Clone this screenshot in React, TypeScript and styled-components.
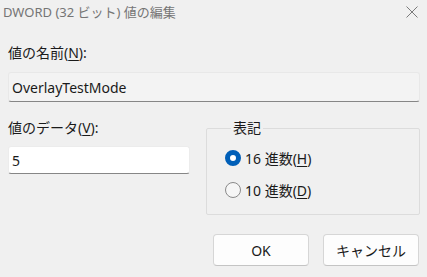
import styled, { createGlobalStyle } from 'styled-components';

const GlobalStyle = createGlobalStyle`
  html, body {
    margin: 0;
    padding: 0;
    background: #f0f0f0;
  }
  body {
    font-family: "Noto Sans", "Noto Sans CJK JP", sans-serif;
    color: #1a1a1a;
  }
`;

const Dialog = styled.div`
  width: 427px;
  height: 277px;
  background: #f0f0f0;
  display: flex;
  flex-direction: column;
  font-size: 14px;
`;

const TitleBar = styled.div`
  height: 30px;
  display: flex;
  align-items: flex-start;
  justify-content: space-between;
  padding: 2px 8px 0 3px;
  box-sizing: border-box;
`;

const Title = styled.span`
  font-size: 13px;
  line-height: 20px;
  color: #757575;
`;

const CloseIcon = styled.svg`
  margin-top: 3px;
`;

const Body = styled.div`
  padding: 13px 7px 0 8px;
  display: flex;
  flex-direction: column;
`;

const Label = styled.div`
  line-height: 20px;
  height: 20px;
`;

const U = styled.span`
  text-decoration: underline;
  text-underline-offset: 2px;
`;

const Field = styled.div<{ $readOnly?: boolean; $width?: number }>`
  box-sizing: border-box;
  height: ${(p) => (p.$readOnly ? 30 : 28)}px;
  width: ${(p) => (p.$width ? `${p.$width}px` : '100%')};
  margin-top: ${(p) => (p.$readOnly ? 9 : 8)}px;
  padding: 0 3px;
  display: flex;
  align-items: center;
  background: ${(p) => (p.$readOnly ? '#f3f3f3' : '#ffffff')};
  border: 1px solid ${(p) => (p.$readOnly ? '#e8e8e8' : '#ececec')};
  border-bottom: 1px solid #868686;
  border-radius: 3px;
  font-size: 14px;
`;

const Row = styled.div`
  display: flex;
  margin-top: 16px;
`;

const Column = styled.div`
  display: flex;
  flex-direction: column;
`;

const Group = styled.fieldset`
  margin: 0 0 0 16px;
  width: 215px;
  height: 97px;
  box-sizing: border-box;
  border: 1px solid #dcdcdc;
  border-radius: 2px;
  padding: 10px 0 0 18px;
  display: flex;
  flex-direction: column;
  gap: 12px;
`;

const Legend = styled.legend`
  padding: 0 2px;
  margin-left: 6px;
  line-height: 20px;
`;

const RadioRow = styled.label`
  display: flex;
  align-items: center;
  gap: 4px;
  height: 20px;
`;

const RadioDot = styled.span<{ $checked?: boolean }>`
  width: 16px;
  height: 16px;
  box-sizing: border-box;
  border-radius: 50%;
  flex-shrink: 0;
  background: ${(p) => (p.$checked ? '#ffffff' : '#f6f6f6')};
  border: ${(p) => (p.$checked ? '5px solid #005fb8' : '1px solid #8a8a8a')};
`;

const Buttons = styled.div`
  display: flex;
  justify-content: flex-end;
  gap: 14px;
  margin-top: 19px;
  padding-right: 1px;
`;

const Button = styled.button`
  width: 96px;
  height: 32px;
  box-sizing: border-box;
  background: #fdfdfd;
  border: 1px solid #d6d6d6;
  border-bottom-color: #c4c4c4;
  border-radius: 4px;
  font-family: inherit;
  font-size: 14px;
  color: #1a1a1a;
  padding: 0;
`;

export default function App() {
  return (
    <>
      <GlobalStyle />
      <Dialog>
        <TitleBar>
          <Title>DWORD (32 ビット) 値の編集</Title>
          <CloseIcon width="14" height="14" viewBox="0 0 14 14">
            <path d="M1.5 1.5 L12.5 12.5 M12.5 1.5 L1.5 12.5" stroke="#7a7a7a" strokeWidth="1" fill="none" />
          </CloseIcon>
        </TitleBar>
        <Body>
          <Label>
            値の名前(<U>N</U>):
          </Label>
          <Field $readOnly>OverlayTestMode</Field>
          <Row>
            <Column>
              <Label>
                値のデータ(<U>V</U>):
              </Label>
              <Field $width={182}>5</Field>
            </Column>
            <Group>
              <Legend>表記</Legend>
              <RadioRow>
                <RadioDot $checked />
                <span>
                  16 進数(<U>H</U>)
                </span>
              </RadioRow>
              <RadioRow>
                <RadioDot />
                <span>
                  10 進数(<U>D</U>)
                </span>
              </RadioRow>
            </Group>
          </Row>
          <Buttons>
            <Button>OK</Button>
            <Button>キャンセル</Button>
          </Buttons>
        </Body>
      </Dialog>
    </>
  );
}
